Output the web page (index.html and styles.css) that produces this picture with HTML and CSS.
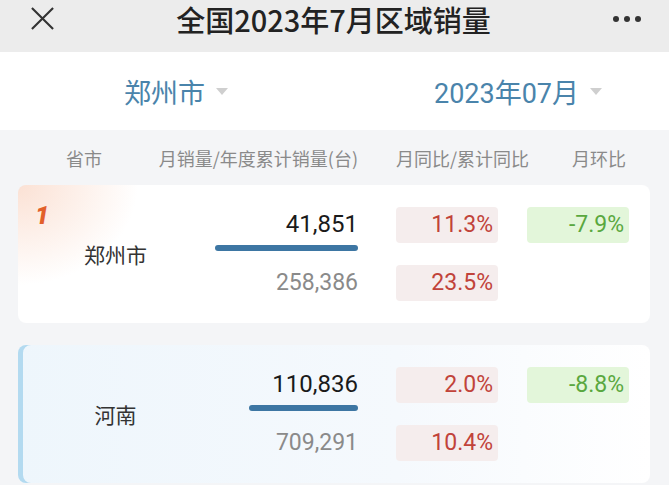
FILE: index.html
```html
<!DOCTYPE html>
<html lang="zh-CN">
<head>
  <meta charset="UTF-8">
  <meta name="viewport" content="width=device-width, initial-scale=1.0">
  <title>全国2023年7月区域销量</title>
  <link rel="stylesheet" href="styles.css">
</head>
<body>
  <div class="topbar">
    <svg class="close-icon" width="26" height="26" viewBox="0 0 26 26">
      <path d="M2 2 L24 24 M24 2 L2 24" stroke="#333" stroke-width="2.2" fill="none"/>
    </svg>
    <div class="title">全国2023年7月区域销量</div>
    <svg class="more-icon" width="30" height="8" viewBox="0 0 30 8">
      <circle cx="4" cy="4" r="3" fill="#333"/>
      <circle cx="15" cy="4" r="3" fill="#333"/>
      <circle cx="26" cy="4" r="3" fill="#333"/>
    </svg>
  </div>

  <div class="filters">
    <div class="picker">郑州市<span class="arrow"></span></div>
    <div class="picker">2023年07月<span class="arrow"></span></div>
  </div>

  <div class="list">
    <div class="table-head">
      <div class="head-name">省市</div>
      <div class="head-num">月销量/年度累计销量(台)</div>
      <div class="head-yoy">月同比/累计同比</div>
      <div class="head-mom">月环比</div>
    </div>

    <div class="card card-top">
      <span class="rank">1</span>
      <div class="name">郑州市</div>
      <div class="nums">
        <div class="month">41,851</div>
        <div class="bar" style="width: 143px"></div>
        <div class="total">258,386</div>
      </div>
      <div class="pills yoy">
        <div class="pill up">11.3%</div>
        <div class="pill up">23.5%</div>
      </div>
      <div class="pills mom">
        <div class="pill down">-7.9%</div>
      </div>
    </div>

    <div class="card card-province">
      <div class="name">河南</div>
      <div class="nums">
        <div class="month">110,836</div>
        <div class="bar" style="width: 109px"></div>
        <div class="total">709,291</div>
      </div>
      <div class="pills yoy">
        <div class="pill up">2.0%</div>
        <div class="pill up">10.4%</div>
      </div>
      <div class="pills mom">
        <div class="pill down">-8.8%</div>
      </div>
    </div>
  </div>
</body>
</html>
```

FILE: styles.css
```css
body {
  margin: 0;
  font-family: Roboto, "Noto Sans CJK SC", sans-serif;
  background: #f4f5f7;
  color: #222;
  height: 485px;
  overflow: hidden;
}

.topbar {
  height: 52px;
  background: #ececec;
  display: flex;
  align-items: flex-start;
  justify-content: space-between;
  padding: 2px 27px 0 30px;
  box-sizing: border-box;
}

.close-icon {
  width: 25px;
  height: 25px;
  margin-top: 4px;
}

.title {
  font-family: "Noto Sans CJK SC", sans-serif;
  font-size: 29px;
  line-height: 34px;
  font-weight: 500;
  color: #222;
}

.more-icon {
  margin-top: 13px;
}

.filters {
  height: 78px;
  background: #fff;
  display: flex;
  align-items: center;
  justify-content: space-between;
  padding: 0 67px 0 124px;
}

.picker {
  font-family: Roboto, "Noto Sans CJK SC", sans-serif;
  font-size: 27px;
  color: #4a84ab;
  display: flex;
  align-items: center;
}

.arrow {
  width: 0;
  height: 0;
  border-left: 6px solid transparent;
  border-right: 6px solid transparent;
  border-top: 7px solid #cfcfcf;
  margin-left: 11px;
}

.list {
  padding: 0 19px 0 18px;
}

.table-head,
.card {
  display: grid;
  grid-template-columns: 195px 145px 38px 102px 29px 102px 21px;
}

.table-head {
  height: 55px;
  align-items: center;
  font-family: "Noto Sans CJK SC", sans-serif;
  font-size: 18px;
  color: #8a8a8a;
  white-space: nowrap;
}

.head-name {
  grid-column: 1;
  padding-left: 48px;
}

.head-num {
  grid-column: 2;
  margin-left: -70px;
  text-align: right;
}

.head-yoy {
  grid-column: 4 / 6;
}

.head-mom {
  grid-column: 6;
  text-align: right;
  padding-right: 3px;
}

.card {
  position: relative;
  padding: 22px 0;
  border-radius: 8px;
  background: #fff;
  margin-bottom: 22px;
  align-items: center;
}

.card-top {
  background: radial-gradient(ellipse 120px 100px at 0 0, #fbe1d4 0, rgba(255,255,255,0) 100%), #fff;
}

.card-province {
  background: linear-gradient(90deg, #eef6fc 0, #f5f9fd 60%, #fff 100%);
  box-shadow: inset 5px 0 0 #b3daf0;
}

.rank {
  position: absolute;
  left: 17px;
  top: 16px;
  font-size: 25px;
  font-weight: 900;
  font-style: italic;
  color: #e2602a;
}

.name {
  grid-column: 1;
  text-align: center;
  font-family: "Noto Sans CJK SC", sans-serif;
  font-size: 21px;
  color: #333;
}

.nums {
  grid-column: 2;
  display: flex;
  flex-direction: column;
  align-items: flex-end;
}

.month {
  font-size: 24px;
  line-height: 32px;
  color: #1a1a1a;
}

.bar {
  height: 6px;
  border-radius: 3px;
  background: #3d76a3;
  margin: 5px 0 14px;
}

.total {
  font-size: 23px;
  line-height: 36px;
  color: #8a8a8a;
}

.pills {
  display: flex;
  flex-direction: column;
  gap: 22px;
  align-self: start;
}

.pills.yoy {
  grid-column: 4;
}

.pills.mom {
  grid-column: 6;
}

.pill {
  height: 36px;
  line-height: 36px;
  border-radius: 4px;
  text-align: right;
  padding-right: 5px;
  font-size: 23px;
}

.pill.up {
  background: #f5eded;
  color: #c1433a;
}

.pill.down {
  background: #e3f6da;
  color: #5aa83f;
}
```
